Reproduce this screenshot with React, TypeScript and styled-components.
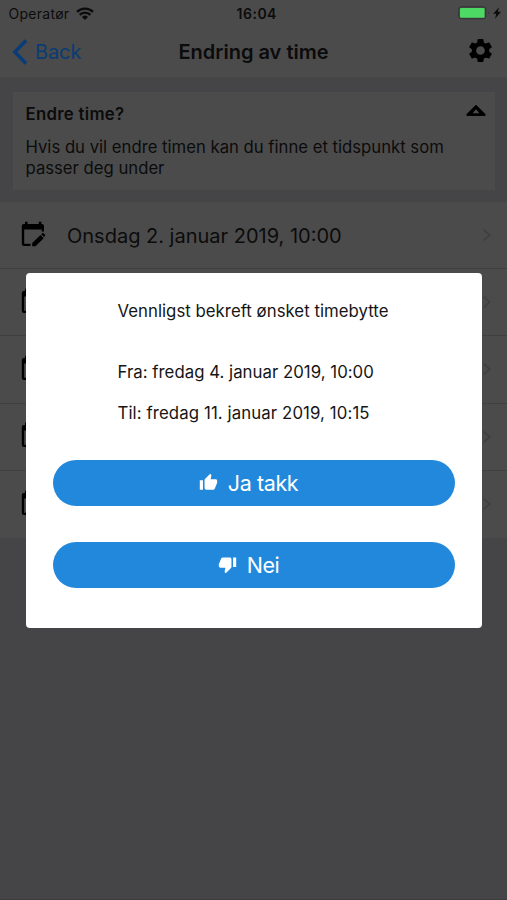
import React from "react";
import styled, { createGlobalStyle } from "styled-components";
import { MdSettings, MdThumbUp, MdThumbDown } from "react-icons/md";

const GlobalStyle = createGlobalStyle`
  * { box-sizing: border-box; }
  body { margin: 0; background: #454547; overflow: hidden; }
`;

const Screen = styled.div`
  width: 507px;
  height: 900px;
  display: flex;
  flex-direction: column;
  background: #454547;
  color: #0b0b0c;
  font-family: Inter, "Liberation Sans", sans-serif;
  border-bottom: 1px solid #3e3b3e;
`;

const TopArea = styled.header`
  height: 78px;
  flex: none;
  background: #4b4b4b;
  border-bottom: 1px solid #474748;
`;

const StatusBar = styled.div`
  height: 27px;
  display: grid;
  grid-template-columns: 1fr auto 1fr;
  align-items: center;
  padding: 0 5px 0 8.5px;
`;

const Carrier = styled.div`
  display: flex;
  align-items: center;
  gap: 7px;
`;

const Clock = styled.div`
  display: flex;
  padding-left: 3px;
`;

const Power = styled.div`
  display: flex;
  align-items: center;
  justify-content: flex-end;
  margin-top: -1px;
`;

const NavBar = styled.div`
  height: 50px;
  display: grid;
  grid-template-columns: 1fr auto 1fr;
  align-items: center;
  padding: 0 12px 0 12px;
`;

const Back = styled.div`
  display: flex;
  align-items: center;
  gap: 7px;
  color: #0a3c74;
`;

const NavAction = styled.div`
  display: flex;
  justify-content: flex-end;
  color: #000;
  margin-top: -3px;
`;

const Text = styled.span<{ $size: number; $weight?: number; $track?: number }>`
  font-size: ${(p) => p.$size}px;
  font-weight: ${(p) => p.$weight ?? 400};
  letter-spacing: ${(p) => p.$track ?? 0}px;
  white-space: nowrap;
`;

const InfoCard = styled.section`
  flex: none;
  margin: 14px 12px 12px 13px;
  height: 98px;
  padding: 12px 9px 0 12.5px;
  background: #4b4b4b;
`;

const InfoHeader = styled.div`
  display: flex;
  justify-content: space-between;
  line-height: 20px;
  height: 33px;
`;

const InfoBody = styled.div`
  display: flex;
  flex-direction: column;
  line-height: 21px;
`;

const List = styled.div`
  flex: none;
  display: flex;
  flex-direction: column;
  background: #4b4b4b;
`;

const Row = styled.div`
  height: 67.2px;
  display: flex;
  align-items: center;
  padding: 0 15px 0 21px;
  border-bottom: 1px solid #404041;
  &:last-child { border-bottom: 0; }
`;

const RowIcon = styled.div`
  width: 46px;
  display: flex;
  margin-top: -3px;
`;

const RowLabel = styled.div`
  flex: 1;
  padding-top: 2px;
`;

const Backdrop = styled.div`
  position: fixed;
  inset: 0;
  width: 507px;
  height: 900px;
  display: flex;
  align-items: center;
  justify-content: center;
`;

const Dialog = styled.div`
  width: 456px;
  height: 354.5px;
  margin-top: 1px;
  padding: 28px 27px 0;
  background: #fff;
  border-radius: 4px;
  display: flex;
  flex-direction: column;
`;

const Message = styled.div`
  display: flex;
  flex-direction: column;
  padding-left: 65px;
  line-height: 20px;
  color: #151515;
`;

const Change = styled.div`
  display: flex;
  flex-direction: column;
  gap: 21px;
  margin-top: 41px;
`;

const Actions = styled.div`
  display: flex;
  flex-direction: column;
  gap: 36.5px;
  margin-top: 36.5px;
`;

const PillButton = styled.button`
  height: 46px;
  border: 0;
  border-radius: 23px;
  background: #2188dc;
  color: #fff;
  font-family: inherit;
  display: flex;
  align-items: center;
  justify-content: center;
  gap: 10px;
  padding: 0 10px 0 0;
  svg { margin-top: -1px; }
`;

const Wifi = () => (
  <svg width="18" height="13" viewBox="0 0 18 13" fill="none" stroke="#0b0b0c" strokeWidth="2.4">
    <path d="M1 4.9a11.3 11.3 0 0 1 16 0" />
    <path d="M3.7 7.9a7.4 7.4 0 0 1 10.6 0" />
    <path d="M6 10a4.3 4.3 0 0 1 6 0L9 13z" fill="#0b0b0c" stroke="none" />
  </svg>
);

const Battery = () => (
  <svg width="44" height="14" viewBox="0 0 44 14">
    <rect x="0.8" y="0.8" width="27" height="12" rx="2.5" fill="#4b4b4b" stroke="#333334" />
    <rect x="2" y="2" width="24.6" height="9.7" rx="1" fill="#4cd964" />
    <path d="M30 5.2q1.8 1.5 0 3.2z" fill="#333334" />
    <path d="M41 1.3L35.2 7.8h3.1L37 12.7l6-7h-3.2z" fill="#0b0b0c" />
  </svg>
);

const CalendarEdit = () => (
  <svg width="25" height="26" viewBox="0 0 25 26">
    <path d="M4 .8h2.6V3h11.2V.8h2.6V3H21a2 2 0 0 1 2 2v5.5h-2.3V8.6H3.2v14.1h6.3V25H3a2.2 2.2 0 0 1-2.2-2.2V5a2 2 0 0 1 2-2H4z" />
    <path d="M11.2 25.3v-3.2l8.3-8.1 3.2 3.2-8.2 8.1zM20.2 13.3l1-1q.7-.6 1.4 0l1.3 1.3q.6.6 0 1.3l-1 1z" />
  </svg>
);

const Chevron = () => (
  <svg width="10" height="16" viewBox="0 0 10 16" fill="none" stroke="#3e3e3f" strokeWidth="1.4">
    <path d="M1.5 2.5L7.7 8l-6.2 5.5" />
  </svg>
);

const appointments = ["Onsdag 2. januar 2019, 10:00", "", "", "", ""];

export default function App() {
  return (
    <Screen>
      <GlobalStyle />
      <TopArea>
        <StatusBar>
          <Carrier><Text $size={14} $track={0.27}>Operatør</Text><Wifi /></Carrier>
          <Clock><Text $size={14} $weight={600} $track={0.5}>16:04</Text></Clock>
          <Power><Battery /></Power>
        </StatusBar>
        <NavBar>
          <Back>
            <svg width="16" height="26" viewBox="0 0 16 26" fill="none" stroke="#083c78" strokeWidth="3.4"><path d="M14 1.5L2.8 13 14 24.5" /></svg>
            <Text $size={20} $track={-0.1}>Back</Text>
          </Back>
          <Text $size={20} $weight={600}>Endring av time</Text>
          <NavAction><MdSettings size={29} /></NavAction>
        </NavBar>
      </TopArea>
      <InfoCard>
        <InfoHeader>
          <Text $size={16.8} $weight={600} $track={0.28}>Endre time?</Text>
          <svg width="20" height="15" viewBox="0 0 20 15"><path d="M10 .8L19.4 10v2H.6v-2zM10 5.2L6.6 9.2h6.8z" fillRule="evenodd" /></svg>
        </InfoHeader>
        <InfoBody>
          <Text $size={16.7}>Hvis du vil endre timen kan du finne et tidspunkt som</Text>
          <Text $size={16.7}>passer deg under</Text>
        </InfoBody>
      </InfoCard>
      <List>
        {appointments.map((label, i) => (
          <Row key={i}>
            <RowIcon><CalendarEdit /></RowIcon>
            <RowLabel><Text $size={20}>{label}</Text></RowLabel>
            <Chevron />
          </Row>
        ))}
      </List>
      <Backdrop>
        <Dialog>
          <Message>
            <Text $size={16.8} $track={0.02}>Vennligst bekreft ønsket timebytte</Text>
            <Change>
              <Text $size={16.8} $track={0.02}>Fra: fredag 4. januar 2019, 10:00</Text>
              <Text $size={16.8} $track={0.1}>Til: fredag 11. januar 2019, 10:15</Text>
            </Change>
          </Message>
          <Actions>
            <PillButton><MdThumbUp size={19} /><Text $size={21.5} $track={-0.4}>Ja takk</Text></PillButton>
            <PillButton><MdThumbDown size={19} /><Text $size={21.5} $track={-0.4}>Nei</Text></PillButton>
          </Actions>
        </Dialog>
      </Backdrop>
    </Screen>
  );
}
